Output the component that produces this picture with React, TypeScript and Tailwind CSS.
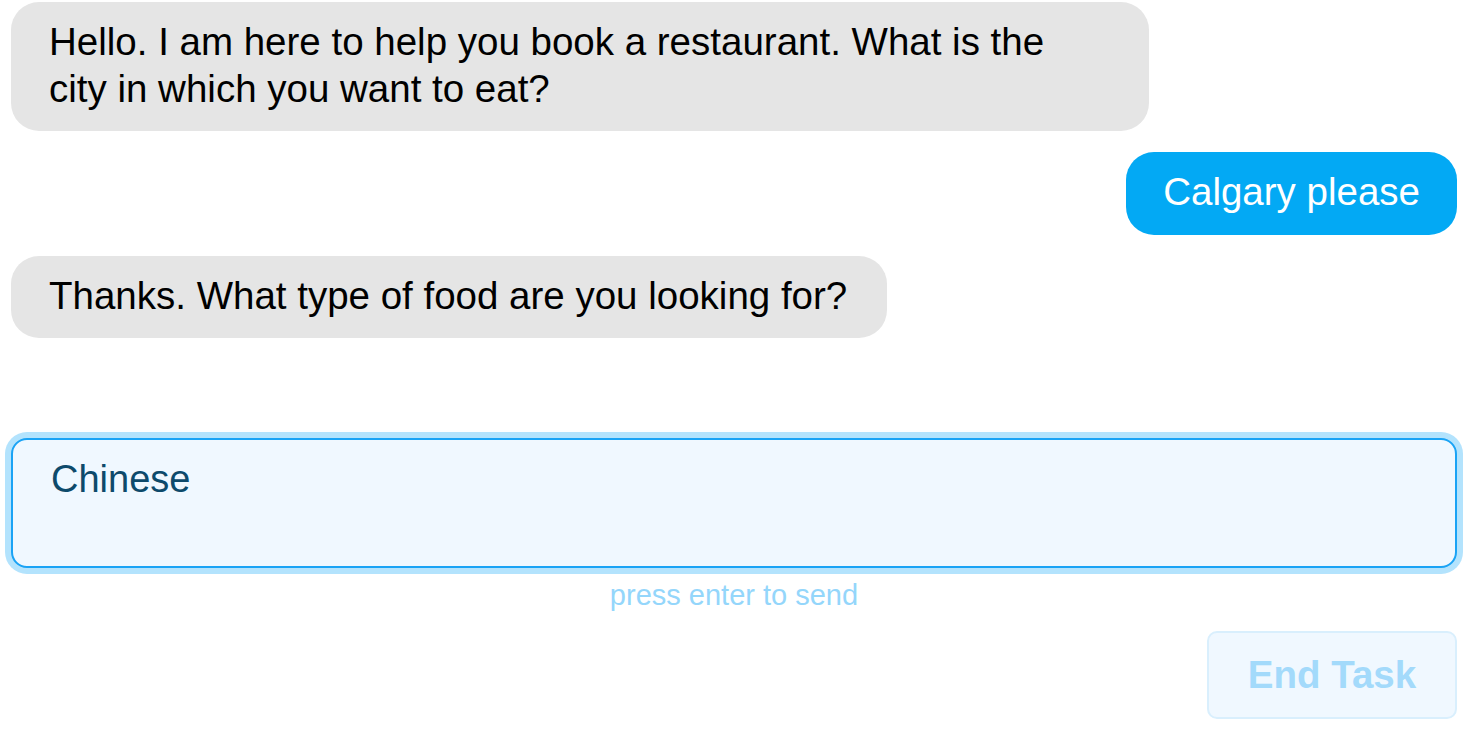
import { useState } from 'react';

type Message = { from: 'bot' | 'user'; text: string };

const messages: Message[] = [
  { from: 'bot', text: 'Hello. I am here to help you book a restaurant. What is the city in which you want to eat?' },
  { from: 'user', text: 'Calgary please' },
  { from: 'bot', text: 'Thanks. What type of food are you looking for?' },
];

export default function App() {
  const [draft, setDraft] = useState('Chinese');

  return (
    <div
      className="min-h-screen bg-white pl-[11px] pr-[9px] pt-[2px]"
      style={{ fontFamily: '"Liberation Sans", Arial, sans-serif' }}
    >
      <div className="flex flex-col gap-[21px]">
        {messages.map((m, i) =>
          m.from === 'bot' ? (
            <div key={i} className="flex justify-start">
              <div className="max-w-[1138px] rounded-[28px] bg-[#e5e5e5] pl-[38px] pr-[40px] pt-[17px] pb-[19px] text-[38.5px] leading-[46.5px] text-black">
                {m.text}
              </div>
            </div>
          ) : (
            <div key={i} className="flex justify-end">
              <div className="rounded-[28px] bg-[#03a9f4] px-[37px] pt-[17px] pb-[19px] text-[38.5px] leading-[46.5px] text-white">
                {m.text}
              </div>
            </div>
          )
        )}
      </div>

      <div className="mt-[100px]">
        <textarea
          value={draft}
          onChange={e => setDraft(e.target.value)}
          className="block h-[130px] w-full resize-none rounded-[16px] border-2 border-[#1aa3f5] bg-[#f0f8ff] px-[38px] pt-[16px] pb-[10px] text-[38px] leading-[46px] text-[#0d4a6b] shadow-[0_0_0_6px_#b3e3fd] outline-none"
          style={{ fontFamily: '"Liberation Sans", Arial, sans-serif' }}
        />
        <p className="mt-[11px] text-center text-[29px] leading-[32px] text-[#94d6fb]">press enter to send</p>
      </div>

      <div className="mt-[20px] flex justify-end">
        <button className="h-[88px] w-[250px] rounded-[10px] border-2 border-[#d9effd] bg-[#f0f8ff] text-[38.5px] font-bold text-[#a3dafb]">
          End Task
        </button>
      </div>
    </div>
  );
}
